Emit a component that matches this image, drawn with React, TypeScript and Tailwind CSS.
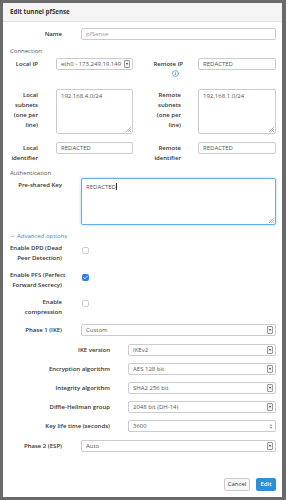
import { Info, ChevronDown, Check } from 'lucide-react'

const font = { fontFamily: '"Open Sans", "Noto Sans", sans-serif' }

function Arrow() {
  return (
    <span className="ml-auto flex h-[8px] w-[6px] shrink-0 items-center justify-center rounded-[1px] border border-[#999] bg-[#f4f4f4]">
      <span className="h-0 w-0 border-x-[1.5px] border-t-[2px] border-x-transparent border-t-[#333]" />
    </span>
  )
}

function Select({ value, className = '' }: { value: string; className?: string }) {
  return (
    <div className={`flex h-[12px] items-center whitespace-nowrap rounded-[2px] border border-[#ccc] bg-white pl-[4px] pr-[2px] text-[#555] ${className}`}>
      <span>{value}</span>
      <Arrow />
    </div>
  )
}

function Input({ value, className = '' }: { value: string; className?: string }) {
  return (
    <div className={`flex h-[12px] items-center whitespace-nowrap rounded-[2px] border border-[#ccc] bg-white px-[4px] text-[#555] ${className}`}>
      {value}
    </div>
  )
}

function Grip() {
  return (
    <svg className="absolute bottom-[1px] right-[1px]" width="5" height="5" viewBox="0 0 5 5">
      <path d="M5 0 L0 5 M5 2 L2 5 M5 4 L4 5" stroke="#999" strokeWidth="0.7" />
    </svg>
  )
}

function Area({ value, className = '' }: { value: string; className?: string }) {
  return (
    <div className={`relative rounded-[2px] border border-[#ccc] bg-white px-[4px] pt-[2px] text-[#555] ${className}`}>
      {value}
      <Grip />
    </div>
  )
}

function Box({ checked, className = '' }: { checked?: boolean; className?: string }) {
  return checked ? (
    <span className={`block h-[7px] w-[7px] shrink-0 rounded-[2px] bg-[#2f7ee6] ${className}`}>
      <Check size={7} strokeWidth={3.5} color="white" className="p-[0.5px]" />
    </span>
  ) : (
    <span className={`block h-[7px] w-[7px] shrink-0 rounded-[2px] border border-[#cfcfcf] bg-white ${className}`} />
  )
}

export default function App() {
  return (
    <div style={font} className="h-[500px] w-[286px] overflow-hidden bg-[#6a6a6a] pb-[3px] pl-[3px] pr-[4px] pt-[3px] text-[6px] text-[#333]">
      <div className="flex h-full flex-col bg-white">
        <div className="flex h-[19px] shrink-0 items-center border-b border-[#e6e6e6] bg-[#f5f5f5] px-[7px] text-[6.2px] font-bold">
          Edit tunnel pfSense
        </div>

        <div className="flex flex-1 flex-col whitespace-nowrap pb-[6px] pl-[7px] pr-[6px]">
          {/* Name */}
          <div className="mt-[6px] flex items-center">
            <div className="w-[52px] text-right font-semibold">Name</div>
            <Input value="pfSense" className="ml-[19px] flex-1 bg-[#f2f2f2] text-[#999]" />
          </div>

          <div className="mt-[7px] h-[9px] leading-[9px] text-[#555]">Connection</div>

          {/* Local / Remote IP */}
          <div className="mt-[2px] flex items-start">
            <div className="w-[28px] pt-[1px] text-right font-semibold leading-[10px]">Local IP</div>
            <Select value="eth0 - 173.249.19.149" className="ml-[18px] w-[77px]" />
            <div className="flex w-[50px] flex-col items-end pt-[1px] leading-[10px]">
              <span className="font-semibold">Remote IP</span>
              <Info size={7} color="#2d8fd5" strokeWidth={2.5} className="mr-[4px] mt-[1px]" />
            </div>
            <Input value="REDACTED" className="ml-[15px] flex-1" />
          </div>

          {/* Subnets */}
          <div className="mt-[12px] flex items-start">
            <div className="w-[28px] pt-[1px] text-right font-semibold leading-[10px]">
              Local<br />subnets<br />(one per<br />line)
            </div>
            <Area value="192.168.4.0/24" className="ml-[18px] h-[45px] w-[77px]" />
            <div className="w-[48px] pt-[1px] text-right font-semibold leading-[10px]">
              Remote<br />subnets<br />(one per<br />line)
            </div>
            <Area value="192.168.1.0/24" className="ml-[17px] h-[45px] flex-1" />
          </div>

          {/* Identifiers */}
          <div className="mt-[8px] flex items-start">
            <div className="w-[28px] pt-[1px] text-right font-semibold leading-[10px]">
              Local<br />identifier
            </div>
            <Input value="REDACTED" className="ml-[18px] w-[77px]" />
            <div className="w-[48px] pt-[1px] text-right font-semibold leading-[10px]">
              Remote<br />identifier
            </div>
            <Input value="REDACTED" className="ml-[17px] flex-1" />
          </div>

          <div className="mt-[6px] h-[9px] leading-[9px] text-[#555]">Authentication</div>

          {/* PSK */}
          <div className="flex items-start">
            <div className="w-[52px] pt-[2px] text-right font-semibold leading-[10px]">Pre-shared Key</div>
            <div className="relative ml-[19px] h-[47px] flex-1 rounded-[2px] border border-[#66afe9] bg-white px-[4px] pt-[3px] text-[#555] shadow-[0_0_3px_rgba(102,175,233,0.6)]">
              REDACTED<span className="ml-[0.5px] inline-block h-[7px] w-[0.5px] translate-y-[1px] bg-[#333]" />
              <Grip />
            </div>
          </div>

          <div className="mt-[7px] flex h-[9px] items-center text-[#2d8fd5]">
            <ChevronDown size={5} strokeWidth={3} className="mr-[2px]" />
            Advanced options
          </div>

          {/* Checkboxes */}
          <div className="mt-[2px] flex items-start">
            <div className="w-[52px] text-right font-semibold leading-[10px]">
              Enable DPD (Dead<br />Peer Detection)
            </div>
            <Box className="ml-[20px] mt-[4px]" />
          </div>
          <div className="mt-[7px] flex items-start">
            <div className="w-[52px] text-right font-semibold leading-[10px]">
              Enable PFS (Perfect<br />Forward Secrecy)
            </div>
            <Box checked className="ml-[20px] mt-[4px]" />
          </div>
          <div className="mt-[7px] flex items-start">
            <div className="w-[52px] text-right font-semibold leading-[10px]">
              Enable<br />compression
            </div>
            <Box className="ml-[20px] mt-[3px]" />
          </div>

          {/* Phase 1 */}
          <div className="mt-[7px] flex items-center">
            <div className="w-[52px] text-right font-semibold">Phase 1 (IKE)</div>
            <Select value="Custom" className="ml-[19px] flex-1" />
          </div>

          {[
            ['IKE version', 'IKEv2', 8],
            ['Encryption algorithm', 'AES 128 bit', 7],
            ['Integrity algorithm', 'SHA2 256 bit', 7],
            ['Diffie-Hellman group', '2048 bit (DH-14)', 7],
          ].map(([label, value, mt]) => (
            <div key={label as string} className={`flex items-center ${mt === 8 ? 'mt-[8px]' : 'mt-[7px]'}`}>
              <div className="w-[100px] text-right font-semibold">{label}</div>
              <Select value={value as string} className="ml-[18px] flex-1" />
            </div>
          ))}

          <div className="mt-[7px] flex items-center">
            <div className="w-[100px] text-right font-semibold">Key life time (seconds)</div>
            <div className="ml-[18px] flex h-[12px] flex-1 items-center rounded-[2px] border border-[#ccc] bg-white pl-[4px] pr-[3px] text-[#555]">
              3600
              <span className="ml-auto flex flex-col gap-[1px]">
                <span className="h-0 w-0 border-x-[1.5px] border-b-[2px] border-x-transparent border-b-[#888]" />
                <span className="h-0 w-0 border-x-[1.5px] border-t-[2px] border-x-transparent border-t-[#888]" />
              </span>
            </div>
          </div>

          <div className="mt-[8px] flex items-center">
            <div className="w-[52px] text-right font-semibold">Phase 2 (ESP)</div>
            <Select value="Auto" className="ml-[19px] flex-1" />
          </div>

          <div className="mt-auto flex justify-end gap-[6px]">
            <button className="h-[13px] w-[26px] rounded-[2px] border border-[#ccc] bg-[#f7f7f7] text-[6px] text-[#333]">
              Cancel
            </button>
            <button className="h-[13px] w-[20px] rounded-[2px] bg-[#2d8fd5] text-[6px] font-semibold text-white">
              Edit
            </button>
          </div>
        </div>
      </div>
    </div>
  )
}
